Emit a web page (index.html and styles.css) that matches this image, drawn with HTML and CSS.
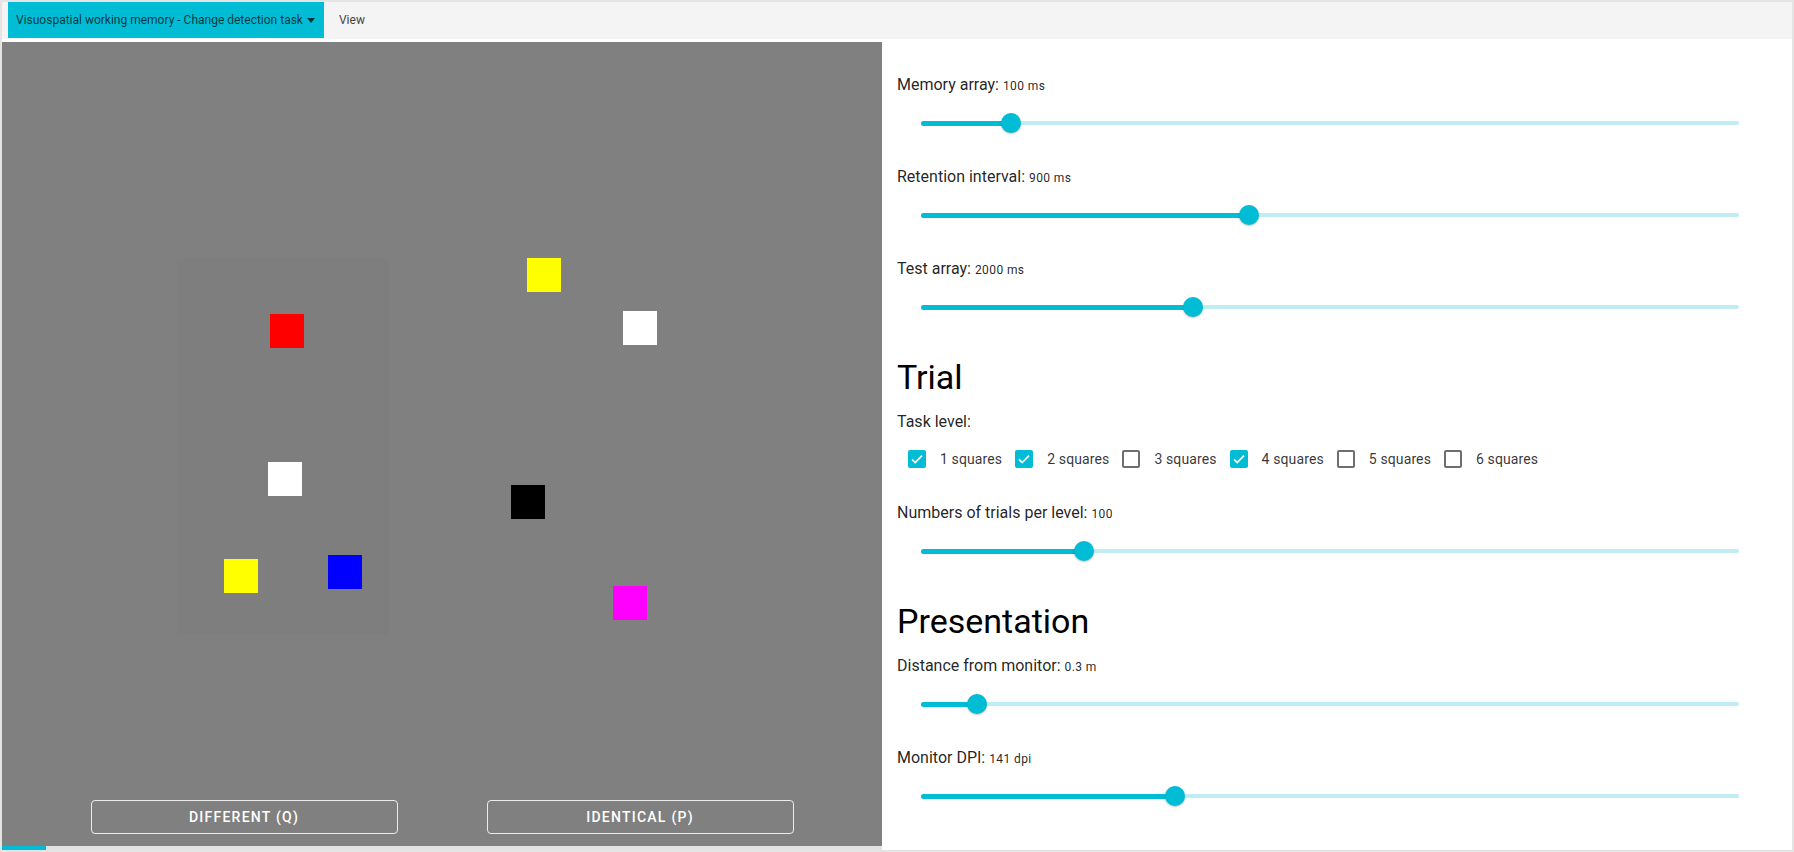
FILE: index.html
```html
<!DOCTYPE html>
<html lang="en">
<head>
<meta charset="utf-8">
<title>Visuospatial working memory - Change detection task</title>
<link rel="stylesheet" href="styles.css">
</head>
<body>
<div class="app">
  <header class="menubar">
    <button class="menu menu-primary">Visuospatial working memory - Change detection task <span class="caret"></span></button>
    <button class="menu">View</button>
  </header>
  <main class="main">
    <div class="left">
      <section class="stage">
        <div class="area"></div>
        <div class="sq red" style="left:268px;top:272px"></div>
        <div class="sq white" style="left:266px;top:420px"></div>
        <div class="sq yellow" style="left:222px;top:517px"></div>
        <div class="sq blue" style="left:326px;top:513px"></div>
        <div class="sq yellow" style="left:525px;top:216px"></div>
        <div class="sq white" style="left:621px;top:269px"></div>
        <div class="sq black" style="left:509px;top:443px"></div>
        <div class="sq magenta" style="left:611px;top:544px"></div>
        <div class="actions">
          <button class="answer">DIFFERENT (Q)</button>
          <button class="answer">IDENTICAL (P)</button>
        </div>
      </section>
      <div class="progress"><div class="progress-bar"></div></div>
    </div>
    <section class="settings">
      <div class="field">
        <div class="label">Memory array: <span class="val">100 ms</span></div>
        <div class="slider"><div class="track"><div class="active" style="width:11%"></div><div class="thumb" style="left:11%"></div></div></div>
      </div>
      <div class="field">
        <div class="label">Retention interval: <span class="val">900 ms</span></div>
        <div class="slider"><div class="track"><div class="active" style="width:40.1%"></div><div class="thumb" style="left:40.1%"></div></div></div>
      </div>
      <div class="field">
        <div class="label">Test array: <span class="val">2000 ms</span></div>
        <div class="slider"><div class="track"><div class="active" style="width:33.3%"></div><div class="thumb" style="left:33.3%"></div></div></div>
      </div>

      <h2 class="heading">Trial</h2>
      <div class="label">Task level:</div>
      <div class="checks">
        <label class="check"><span class="box on"><svg viewBox="0 0 18 18"><path d="M4 9.3l3.2 3.2L14 5.6" /></svg></span><span>1 squares</span></label>
        <label class="check"><span class="box on"><svg viewBox="0 0 18 18"><path d="M4 9.3l3.2 3.2L14 5.6" /></svg></span><span>2 squares</span></label>
        <label class="check"><span class="box"></span><span>3 squares</span></label>
        <label class="check"><span class="box on"><svg viewBox="0 0 18 18"><path d="M4 9.3l3.2 3.2L14 5.6" /></svg></span><span>4 squares</span></label>
        <label class="check"><span class="box"></span><span>5 squares</span></label>
        <label class="check"><span class="box"></span><span>6 squares</span></label>
      </div>
      <div class="field">
        <div class="label">Numbers of trials per level: <span class="val">100</span></div>
        <div class="slider"><div class="track"><div class="active" style="width:19.9%"></div><div class="thumb" style="left:19.9%"></div></div></div>
      </div>

      <h2 class="heading">Presentation</h2>
      <div class="field">
        <div class="label">Distance from monitor: <span class="val">0.3 m</span></div>
        <div class="slider"><div class="track"><div class="active" style="width:6.9%"></div><div class="thumb" style="left:6.9%"></div></div></div>
      </div>
      <div class="field">
        <div class="label">Monitor DPI: <span class="val">141 dpi</span></div>
        <div class="slider"><div class="track"><div class="active" style="width:31.1%"></div><div class="thumb" style="left:31.1%"></div></div></div>
      </div>
    </section>
  </main>
</div>
</body>
</html>
```

FILE: styles.css
```css
* { box-sizing: border-box; }

html, body {
  margin: 0;
  height: 100%;
  overflow: hidden;
}

body {
  background: #e4e4e4;
  font-family: Roboto, "Liberation Sans", Arial, sans-serif;
  color: rgba(0, 0, 0, 0.87);
  padding: 2px;
}

.app {
  height: 848px;
  display: flex;
  flex-direction: column;
  background: #ffffff;
}

.menubar {
  height: 37px;
  flex: none;
  display: flex;
  align-items: flex-start;
  background: #f4f4f4;
  padding-left: 6px;
  margin-bottom: 3px;
}

.menu {
  border: 0;
  background: transparent;
  font-family: Roboto, "Liberation Sans", Arial, sans-serif;
  font-size: 12px;
  color: #444;
  height: 36px;
  padding: 0 15px;
  display: flex;
  align-items: center;
  cursor: pointer;
}

.menu-primary {
  background: #00bcd4;
  color: rgba(0, 0, 0, 0.72);
  padding: 0 9px 0 8px;
}

.caret {
  display: inline-block;
  width: 0;
  height: 0;
  margin-left: 4px;
  border-left: 4.5px solid transparent;
  border-right: 4.5px solid transparent;
  border-top: 5px solid rgba(0, 0, 0, 0.72);
}

.main {
  flex: 1;
  display: flex;
  min-height: 0;
}

.left {
  width: 880px;
  flex: none;
  display: flex;
  flex-direction: column;
}

.stage {
  flex: 1;
  position: relative;
  background: #808080;
  display: flex;
  flex-direction: column;
  justify-content: flex-end;
}

.area {
  position: absolute;
  left: 175px;
  top: 217px;
  width: 212px;
  height: 376px;
  background: #7e7e7e;
}

.sq {
  position: absolute;
  width: 34px;
  height: 34px;
}
.red { background: #ff0000; }
.white { background: #ffffff; }
.yellow { background: #ffff00; }
.blue { background: #0000ff; }
.black { background: #000000; }
.magenta { background: #ff00ff; }

.actions {
  position: relative;
  display: flex;
  justify-content: center;
  gap: 89px;
  padding-bottom: 12px;
}

.answer {
  width: 307px;
  height: 34px;
  background: transparent;
  border: 1px solid rgba(255, 255, 255, 0.85);
  border-radius: 4px;
  color: #ffffff;
  font-family: Roboto, "Liberation Sans", Arial, sans-serif;
  font-size: 14px;
  font-weight: 500;
  letter-spacing: 1.25px;
  cursor: pointer;
}

.progress {
  height: 4px;
  flex: none;
  background: #e2e2e2;
}

.progress-bar {
  width: 44px;
  height: 100%;
  background: #00bcd4;
}

.settings {
  flex: 1;
  background: #ffffff;
  padding: 33px 15px 0 15px;
  overflow: hidden;
}

.label {
  font-size: 16px;
  line-height: 20px;
  color: rgba(0, 0, 0, 0.87);
}

.val {
  font-size: 12px;
  letter-spacing: 0.4px;
}

.slider {
  padding: 17px 0 34px 0;
  margin: 0 38px 0 24px;
}

.track {
  position: relative;
  height: 20px;
}

.track::before {
  content: "";
  position: absolute;
  left: 0;
  right: 0;
  top: 8px;
  height: 4px;
  border-radius: 2px;
  background: #bfedf3;
}

.active {
  position: absolute;
  left: 0;
  top: 7.5px;
  height: 5px;
  border-radius: 2.5px;
  background: #00bcd4;
}

.thumb {
  position: absolute;
  top: 50%;
  width: 20px;
  height: 20px;
  border-radius: 50%;
  background: #00bcd4;
  transform: translate(-50%, -50%);
  box-shadow: 0 1px 2px rgba(0, 0, 0, 0.25);
}

.heading {
  font-size: 34px;
  line-height: 40px;
  font-weight: 400;
  margin: 6px 0 15px 0;
  color: #000;
}

.checks {
  display: flex;
  align-items: center;
  height: 40px;
  margin: 7px 0 24px 0;
  padding-left: 11px;
  gap: 13px;
}

.check {
  display: flex;
  align-items: center;
  gap: 14px;
  font-size: 14px;
  letter-spacing: 0.12px;
  color: rgba(0, 0, 0, 0.8);
}

.box {
  width: 18px;
  height: 18px;
  border: 2px solid #6f6f6f;
  border-radius: 2px;
  display: block;
}

.box.on {
  border: 0;
  background: #00bcd4;
}

.box svg {
  width: 18px;
  height: 18px;
  display: block;
}

.box svg path {
  fill: none;
  stroke: #ffffff;
  stroke-width: 1.7;
}
```
